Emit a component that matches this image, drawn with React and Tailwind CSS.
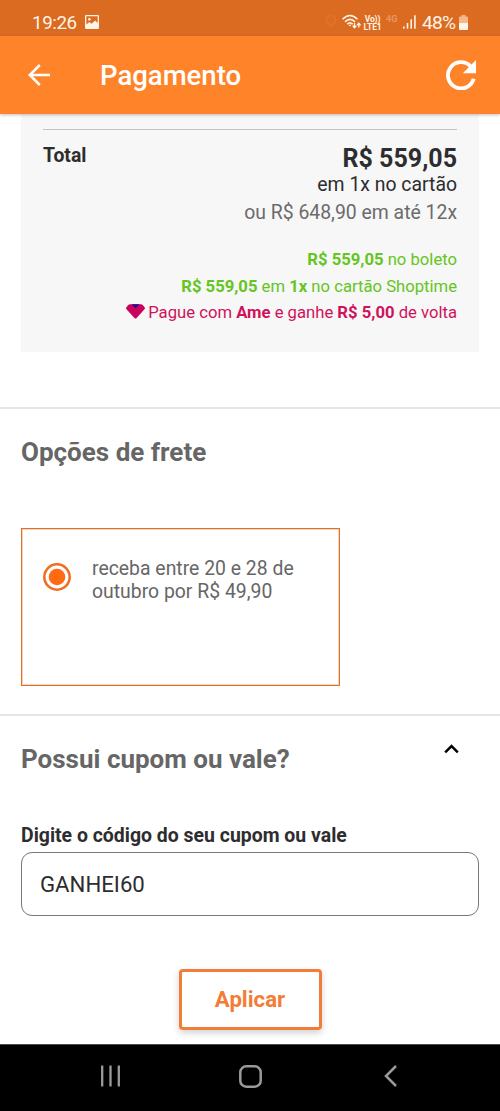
import React from "react";

function StatusBar() {
  return (
    <div className="flex h-9 items-end bg-[#da6b21] pl-8 text-[#fff3e6]">
      <span className="h-[26px] w-[53px] text-[18.8px] leading-[26px] tracking-[-0.4px]">19:26</span>
      <svg className="mb-[7px]" width="14" height="14" viewBox="0 0 14 14">
        <path fillRule="evenodd" fill="currentColor" d="M1.2 0h11.6Q14 0 14 1.200v11.600Q14 14 12.800 14H1.200Q0 14 0 12.800V1.200Q0 0 1.200 0ZM1.300 1.300v8.200L4.300 7l2.200 1.800L10.200 5.600l2.500 2.400V1.300ZM4.400 2.900a1.400 1.400 0 1 1 0 2.800a1.400 1.400 0 0 1 0-2.800Z" />
      </svg>
      <svg className="mb-[8px] ml-[226px]" width="12" height="14" viewBox="0 0 12 14" fill="none" stroke="#df7228" strokeWidth="2.500">
        <path d="M6 12L2 8a4.500 4.500 0 1 1 8 0Z" />
      </svg>
      <svg className="mb-[6px] ml-[5px]" width="19" height="16" viewBox="0 0 19 16" fill="none" stroke="currentColor">
        <path strokeWidth="1.600" d="M.5 5.300Q8-2.300 15.500 5.300M3 7.900Q8 2.900 13 7.900M5.300 10.200Q8 7.600 10.700 10.200" />
        <path fill="currentColor" stroke="none" d="M6.500 10.700h3L8 12.600Z" />
        <path strokeWidth="1.300" d="M12.500 9v4.500M10.700 11.800l1.800 2 1.800-2M16.800 13.500V9.500M15 11.200l1.800-2 1.800 2" />
      </svg>
      <span className="mb-[5px] ml-[2px] w-[19px] text-center text-[8.500px] font-bold leading-[8px] tracking-[-0.1px]">
        Vo))<br />LTE1
      </span>
      <span className="mb-[11px] ml-[4px] w-[12px] text-[9px] font-bold leading-[11px] text-[#e8975e]">4G</span>
      <svg className="mb-[7px] ml-[5px]" width="13" height="14" viewBox="0 0 13 14" fill="currentColor">
        <rect x="0" y="11.500" width="1.600" height="2.200" />
        <rect x="3.700" y="8" width="1.600" height="5.700" />
        <rect x="7.400" y="4.300" width="1.600" height="9.400" />
        <rect x="11.100" y=".3" width="1.600" height="13.400" />
      </svg>
      <span className="ml-[6px] h-[26px] w-[36px] whitespace-nowrap text-[19.200px] leading-[26px] tracking-[-0.800px]">48%</span>
      <svg className="mb-[6px] ml-px" width="9" height="15" viewBox="0 0 9 15">
        <path fill="#f3b78c" d="M2.500 0h4v1.500H8q1 0 1 1V8H0V2.500q0-1 1-1h1.500Z" />
        <path fill="currentColor" d="M0 8h9v6q0 1-1 1H1q-1 0-1-1Z" />
      </svg>
    </div>
  );
}

function AppBar() {
  return (
    <header className="relative flex h-[78px] items-center bg-[#ff8429] pl-7 text-white shadow-[0_1px_3px_rgba(0,0,0,0.25)]">
      <svg width="22" height="22" viewBox="0 0 22 22" fill="none" stroke="currentColor" strokeWidth="2.500">
        <path d="M22 11H2M11.800 1L1.800 11l10 10" />
      </svg>
      <h1 className="mt-[2px] ml-[50px] w-[346px] text-[27.500px] font-medium leading-8">Pagamento</h1>
      <svg width="30" height="30" viewBox="0 0 30 30">
        <path fill="none" stroke="currentColor" strokeWidth="3.800" d="M24.500 6.200A13.100 13.100 0 1 0 27.700 18.700" />
        <path fill="currentColor" d="M30 0v13.200H16.800Z" />
      </svg>
    </header>
  );
}

function Summary() {
  return (
    <section className="mx-[21px] h-[238px] bg-[#f7f7f7] px-[22px] pt-[15px]">
      <div className="flex justify-between border-t border-[#c4c4c4] text-[#2d2d2f]">
        <span className="mt-[13px] text-[19.400px] font-bold leading-[26px]">Total</span>
        <div className="mt-[16px] flex flex-col items-end text-[19.400px]">
          <strong className="h-[26px] text-[25px] font-bold leading-[26px]">R$ 559,05</strong>
          <span className="leading-[26px]">em 1x no cartão</span>
          <span className="mt-[2px] leading-[26px] text-[#6b6b6b]">ou R$ 648,90 em até 12x</span>
        </div>
      </div>
      <div className="mt-[21px] flex flex-col items-end text-[16.670px] leading-[26px] text-[#65c522]">
        <p><b>R$ 559,05</b> no boleto</p>
        <p className="mt-px"><b>R$ 559,05</b> em <b>1x</b> no cartão Shoptime</p>
        <p className="flex items-center text-[#d0125c]">
          <svg className="mr-[3px] mb-[3px]" width="19" height="15" viewBox="0 0 19 15">
            <path fill="#cb005c" d="M4 .3h11q1 0 1.700.7l2 2.600q.6.800-.2 1.600L10.600 14q-1.100 1-2.200 0L.5 5.200q-.8-.8-.2-1.600L2.300 1Q3 .3 4 .3Z" />
            <path fill="#1b118b" d="M5.500.3h8L9.500 4.300Z" />
          </svg>
          <span>Pague com <b>Ame</b> e ganhe <b>R$ 5,00</b> de volta</span>
        </p>
      </div>
    </section>
  );
}

function Shipping() {
  return (
    <section className="mt-[55px] h-[307px] border-t-2 border-[#e6e6e6] px-[21px] pt-[28px]">
      <h2 className="text-[26px] font-bold leading-[31px] text-[#666]">Opções de frete</h2>
      <div className="mt-[60px] flex h-[158px] w-[319px] gap-[21px] border border-[#e0702c] pt-[28px] pl-[21px] shadow-[inset_0_0_0_1px_#f8d3bb]">
        <svg className="mt-[6px] shrink-0" width="28" height="28" viewBox="0 0 28 28">
          <circle cx="14" cy="14" r="12.700" fill="none" stroke="#f36b21" strokeWidth="2.500" />
          <circle cx="14" cy="14" r="8.300" fill="#ff6a13" />
        </svg>
        <p className="w-[215px] text-[19.400px] leading-[23px] text-[#666]">
          receba entre 20 e 28 de<br />outubro por R$ 49,90
        </p>
      </div>
    </section>
  );
}

function Coupon() {
  return (
    <section className="h-[330px] border-t-2 border-[#e6e6e6] px-[21px] pt-[28px]">
      <div className="flex justify-between">
        <h2 className="text-[26px] font-bold leading-[31px] text-[#666]">Possui cupom ou vale?</h2>
        <svg className="mr-[20px]" width="15" height="10" viewBox="0 0 15 10" fill="none" stroke="#000" strokeWidth="2.500">
          <path d="M1.200 8.300L7.500 2l6.300 6.300" />
        </svg>
      </div>
      <label className="mt-[47px] block text-[19.450px] font-bold leading-[28px] text-[#2d2d2f]" htmlFor="coupon">
        Digite o código do seu cupom ou vale
      </label>
      <input
        id="coupon"
        defaultValue="GANHEI60"
        className="mt-[2px] block h-[64px] w-[458px] rounded-[11px] border border-[#777] pl-[18px] text-[22.200px] text-[#2d2d2f]"
      />
      <button className="mx-auto mt-[53px] block h-[61px] w-[143px] rounded-[4px] border-3 border-[#f37c36] text-[22.200px] font-bold text-[#f37c36] shadow-[0_3px_7px_rgba(0,0,0,0.18)]">
        Aplicar
      </button>
    </section>
  );
}

function NavigationBar() {
  return (
    <nav className="flex h-[67px] items-center justify-between border-t border-[#4d4d4d] bg-black pr-[103px] pb-[4px] pl-[100px] text-[#9a9a9a]">
      <svg width="21" height="22" viewBox="0 0 21 22" stroke="currentColor" strokeWidth="2.300">
        <path d="M2.200.5v21M10.500.5v21M18.800.5v21" />
      </svg>
      <svg className="mr-[4px]" width="23" height="23" viewBox="0 0 23 23" fill="none" stroke="currentColor" strokeWidth="2.500">
        <rect x="1.300" y="1.300" width="20.400" height="20.400" rx="6" />
      </svg>
      <svg width="13" height="22" viewBox="0 0 13 22" fill="none" stroke="currentColor" strokeWidth="2.500">
        <path d="M12 1L2 11l10 10" />
      </svg>
    </nav>
  );
}

export default function App() {
  return (
    <div className="h-[1111px] w-[500px] overflow-hidden bg-white font-[Roboto,sans-serif]">
      <StatusBar />
      <AppBar />
      <Summary />
      <Shipping />
      <Coupon />
      <NavigationBar />
    </div>
  );
}
